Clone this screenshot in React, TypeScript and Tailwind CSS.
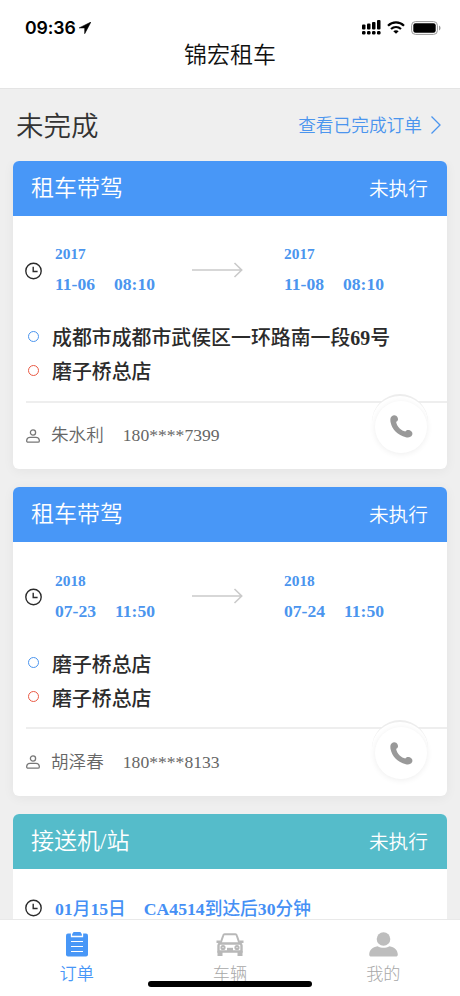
import clsx from "clsx";

type Stop = { year: string; date: string; time: string };

type Order = {
  from: Stop;
  to: Stop;
  pickup: string;
  dropoff: string;
  name: string;
  phone: string;
};

const orders: Order[] = [
  {
    from: { year: "2017", date: "11-06", time: "08:10" },
    to: { year: "2017", date: "11-08", time: "08:10" },
    pickup: "成都市成都市武侯区一环路南一段69号",
    dropoff: "磨子桥总店",
    name: "朱水利",
    phone: "180****7399",
  },
  {
    from: { year: "2018", date: "07-23", time: "11:50" },
    to: { year: "2018", date: "07-24", time: "11:50" },
    pickup: "磨子桥总店",
    dropoff: "磨子桥总店",
    name: "胡泽春",
    phone: "180****8133",
  },
];

// Chinese stays medium, digits and latin letters go bold
function MixedText({ text }: { text: string }) {
  return (
    <>
      {text.split(/([A-Z0-9]+)/).map((part, i) => (
        <span key={i} className={i % 2 ? "font-bold" : "font-medium"}>
          {part}
        </span>
      ))}
    </>
  );
}

function ClockIcon() {
  return (
    <svg className="h-[18px] w-[18px] shrink-0" viewBox="0 0 18 18" fill="none" stroke="#2b2b2b" strokeWidth="1.4">
      <circle cx="8.5" cy="9" r="7.7" />
      <path d="M8.2 4.8v4.7h4.400" />
    </svg>
  );
}

function ArrowIcon() {
  return (
    <svg className="h-4 w-[51px]" viewBox="0 0 51 16" fill="none" stroke="#cacaca" strokeWidth="1.6">
      <path d="M0 8h50M42.5 1l7.2 7-7.2 7" />
    </svg>
  );
}

function PersonIcon() {
  return (
    <svg className="h-[14px] w-[14px] shrink-0" viewBox="0 0 14 14" fill="none" stroke="#777" strokeWidth="1.3">
      <circle cx="7" cy="3.5" r="2.6" />
      <path d="M4 8.300h6a3.300 3.300 0 0 1 3.300 3v.600a1.300 1.300 0 0 1-1.300 1.300H2A1.300 1.300 0 0 1 .7 11.900v-.600A3.300 3.300 0 0 1 4 8.300z" />
    </svg>
  );
}

function PhoneIcon() {
  return (
    <svg className="h-[23px] w-[23px]" viewBox="0 0 23 23" fill="#999">
      <path d="M1.800 1.200C3.800-.3 6.600.3 7.600 2.500c.9 2 .3 3.600-1.500 4.300.5 2.900 1.700 4.900 3.600 6.700 1.700 1.600 3.600 2.600 5.600 3 .8-1.600 2.600-2 4.500-1.200 2.400 1 3.200 3 2.200 5-1 1.900-3.400 2.500-6.200 1.900C7.800 20.400 2.100 14.600.6 7.300.1 4.600.3 2.400 1.800 1.200z" />
    </svg>
  );
}

function StatusBar() {
  return (
    <div className="flex h-10 items-center justify-between pt-[15px] pr-[19px] pl-[25px]">
      <div className="flex items-center gap-[3px] font-['Inter'] text-[17.7px] leading-6 font-semibold text-black">
        <span className="tracking-[-0.1px]">09:36</span>
        <svg className="h-3 w-3" viewBox="0 0 12 12">
          <path d="M11.9.1L.2 5.900h5.500v5.800z" fill="#000" stroke="#000" strokeWidth=".6" strokeLinejoin="round" />
        </svg>
      </div>
      <div className="flex items-center gap-[6px]">
        <svg className="h-[15px] w-[19px]" viewBox="0 0 19 15" fill="#000">
          <rect x="0" y="4.500" width="3.500" height="5" rx="1" />
          <rect x="5" y="3.500" width="3.500" height="6" rx="1" />
          <rect x="10" y="2" width="3.500" height="7.500" rx="1" />
          <rect x="15" y="0" width="3.500" height="9.500" rx="1" />
          <rect x="0" y="11" width="3.500" height="3.500" rx="1.200" />
          <rect x="5" y="11" width="3.500" height="3.500" rx="1.200" />
          <rect x="10" y="11" width="3.500" height="3.500" rx="1.200" />
          <rect x="15" y="11" width="3.500" height="3.500" rx="1.200" />
        </svg>
        <svg className="h-[13px] w-[18px]" viewBox="0 0 18 13" fill="none" stroke="#000" strokeWidth="2.200">
          <path d="M1 4.700c4.500-4.400 11.500-4.400 16 0M4 8c3-2.700 7-2.700 10 0" />
          <path d="M9 12.700L6.300 10.200c1.500-1.300 3.900-1.300 5.400 0z" fill="#000" stroke="none" />
        </svg>
        <svg className="h-[14px] w-[30px]" viewBox="0 0 30 14">
          <rect x=".6" y=".6" width="25.800" height="12.800" rx="3.800" fill="none" stroke="#999" strokeWidth="1" />
          <rect x="2.300" y="2.200" width="22.400" height="9.600" rx="2.200" fill="#000" />
          <path d="M28 4.500c2 .8 2 4.200 0 5z" fill="#999" />
        </svg>
      </div>
    </div>
  );
}

function CardHeader({ title, className }: { title: string; className: string }) {
  return (
    <div className={clsx("flex h-[55px] items-center justify-between pr-[19px] pl-[18px] font-[350] text-white", className)}>
      <span className="pt-[2px] text-[23px]">{title}</span>
      <span className="pt-[3px] text-[19.7px]">未执行</span>
    </div>
  );
}

function StopTime({ stop }: { stop: Stop }) {
  return (
    <div className="w-[100px] font-bold text-[#4b95ee]">
      <div className="text-[15.4px] leading-[22px]">{stop.year}</div>
      <div className="mt-[7px] flex justify-between text-[17.6px] leading-[24px]">
        <span>{stop.date}</span>
        <span>{stop.time}</span>
      </div>
    </div>
  );
}

function Place({ text, ring }: { text: string; ring: string }) {
  return (
    <div className="flex h-[34px] items-center pl-[15px]">
      <span className={clsx("mb-[5px] h-[11px] w-[11px] rounded-full border-[1.5px]", ring)} />
      <span className="ml-[13px] pt-px text-[19.9px] text-[#2b2b2b]">
        <MixedText text={text} />
      </span>
    </div>
  );
}

function OrderCard({ order }: { order: Order }) {
  return (
    <section className="h-[308.5px] shrink-0 overflow-hidden rounded-[6px] bg-white shadow-[0_2px_12px_rgba(0,0,0,0.05)]">
      <CardHeader title="租车带驾" className="bg-[#4897f7]" />
      <div className="flex h-[106px] items-center pt-[2px] pl-3">
        <div className="pt-[2px]">
          <ClockIcon />
        </div>
        <div className="ml-3">
          <StopTime stop={order.from} />
        </div>
        <div className="mr-[41px] ml-[37px]">
          <ArrowIcon />
        </div>
        <StopTime stop={order.to} />
      </div>
      <Place text={order.pickup} ring="border-[#4b95ee]" />
      <Place text={order.dropoff} ring="border-[#ea5a45]" />
      <div className="relative mt-[11px] ml-[13px] flex h-[68px] items-center border-t-2 border-[#eeeeee] text-[17.6px] text-[#666]">
        <PersonIcon />
        <span className="ml-[11px] font-[350]">{order.name}</span>
        <span className="ml-[19px]">{order.phone}</span>
        {/* call button sits over the divider */}
        <div className="absolute -top-[9px] right-[19px] h-[56px] w-[56px] rounded-full border-t-2 border-[#ededed] bg-white" />
        <div className="absolute -top-[2px] right-[20px] flex h-[52px] w-[52px] items-center justify-center rounded-full bg-white shadow-[0_1px_6px_rgba(0,0,0,0.07)]">
          <PhoneIcon />
        </div>
      </div>
    </section>
  );
}

function TabBar() {
  return (
    <nav className="relative grid h-[77px] shrink-0 grid-cols-3 border-t border-[#e9e9e9] bg-white text-[17.2px] font-light text-[#a8a8a8]">
      <div className="flex flex-col items-center pt-[12px] text-[#4897f7]">
        <svg className="h-[25px] w-[22px]" viewBox="0 0 22 25">
          <rect y="1.500" width="22" height="23" rx="2" fill="currentColor" />
          <path d="M5.500 1v3.500h11V1" fill="none" stroke="#fff" strokeWidth="1.300" />
          <rect x="7" y="0" width="8" height="3" rx="1" fill="currentColor" />
          <path d="M5 9.500h12M5 14.500h12M5 19.500h12" stroke="#fff" strokeWidth="1.200" />
        </svg>
        <span className="mt-[5px] leading-[26px] font-[350]">订单</span>
      </div>
      <div className="flex flex-col items-center pt-[12px]">
        <svg className="h-[25px] w-[28px]" viewBox="0 0 28 25" fill="none" stroke="#b8b8b8" strokeWidth="2">
          <path d="M4.500 11.500L7.300 3.200q.3-1 1.300-1h10.800q1 0 1.300 1l2.800 8.300" />
          <path d="M.5 9.800h4M23.500 9.800h4" strokeWidth="2.600" />
          <path d="M4 11.500h20q1.500.5 1.500 2v6h-23v-6q0-1.500 1.500-2z" strokeWidth="2.400" />
          <path d="M2.500 19v4h3v-4M22.500 19v4h3v-4" fill="#b8b8b8" />
          <circle cx="7" cy="15.500" r="1.600" />
          <circle cx="21" cy="15.500" r="1.600" />
          <path d="M11 17.300h6" strokeWidth="3" />
        </svg>
        <span className="mt-[5px] leading-[26px]">车辆</span>
      </div>
      <div className="flex flex-col items-center pt-[12px]">
        <svg className="h-[25px] w-[29px]" viewBox="0 0 29 25" fill="#bdbdbd">
          <circle cx="14.500" cy="7" r="6.800" />
          <path d="M8.500 14.200c4 2.200 8 2.200 12 0 5 .8 8 3.800 8.300 8 .1 1.400-.7 2.300-2.300 2.300h-24C.9 24.500.1 23.600.2 22.200c.3-4.200 3.300-7.200 8.300-8z" />
        </svg>
        <span className="mt-[5px] leading-[26px]">我的</span>
      </div>
      <div className="absolute top-[61px] left-[148px] h-[6px] w-[164px] rounded-full bg-black" />
    </nav>
  );
}

export default function App() {
  return (
    <div className="flex h-[996px] w-[460px] flex-col overflow-hidden bg-[#efefef] font-['Liberation_Serif','Noto_Sans_CJK_SC',serif]">
      <header className="h-[89px] shrink-0 border-b border-[#e4e4e4] bg-white">
        <StatusBar />
        <h1 className="pt-px text-center text-[23px] leading-[30px] font-[350] text-[#111]">锦宏租车</h1>
      </header>
      <div className="flex h-[71.5px] shrink-0 items-center justify-between pr-[19px] pl-4">
        <h2 className="pt-[3px] text-[27.5px] font-[350] text-[#333]">未完成</h2>
        <a className="flex items-center gap-2 text-[17.7px] font-[350] text-[#4b95ee]">
          <span className="pt-[3px]">查看已完成订单</span>
          <svg className="h-[18px] w-[11px]" viewBox="0 0 11 18" fill="none" stroke="currentColor" strokeWidth="1.300">
            <path d="M1.500.5l8.500 8.500-8.500 8.500" />
          </svg>
        </a>
      </div>
      <main className="flex min-h-0 flex-1 flex-col gap-[18px] overflow-hidden px-[13px]">
        {orders.map((order) => (
          <OrderCard key={order.phone} order={order} />
        ))}
        <section className="h-[308px] shrink-0 overflow-hidden rounded-[6px] bg-white">
          <CardHeader title="接送机/站" className="bg-[#55bcca]" />
          <div className="flex h-[79px] items-center pl-3 text-[17.7px] text-[#4590f5]">
            <ClockIcon />
            <span className="ml-3 pt-[2px]">
              <MixedText text="01月15日" />
            </span>
            <span className="ml-[18px] pt-[2px]">
              <MixedText text="CA4514到达后30分钟" />
            </span>
          </div>
        </section>
      </main>
      <TabBar />
    </div>
  );
}
